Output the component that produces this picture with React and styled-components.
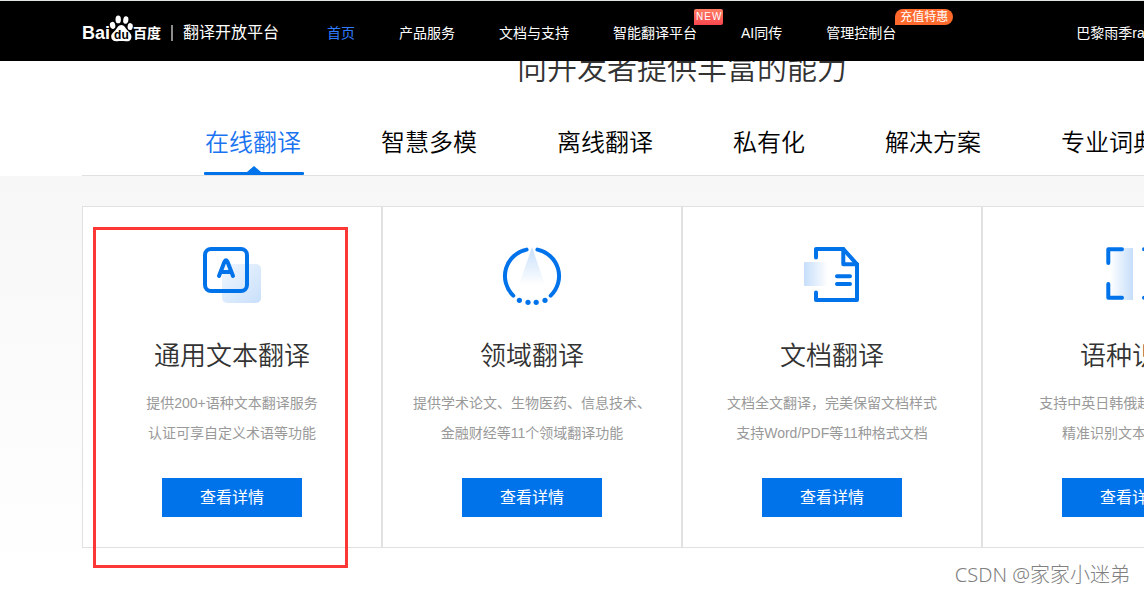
import React from 'react';
import styled, { createGlobalStyle } from 'styled-components';

const BLUE = '#0073eb';

const GlobalStyle = createGlobalStyle`
  *, *::before, *::after { box-sizing: border-box; }
  html, body { margin: 0; padding: 0; }
  body {
    background: #fff;
    color: #333;
    font-family: "Liberation Sans", "Noto Sans CJK SC", sans-serif;
    font-size: 14px;
  }
  h2, h3, p, ul { margin: 0; padding: 0; font-weight: 400; }
  ul { list-style: none; }
  a { color: inherit; text-decoration: none; }
  button { font-family: inherit; cursor: pointer; }
`;

const Page = styled.div`
  position: relative;
  min-height: 100vh;
  overflow: hidden;
`;

const Wide = styled.div`
  min-width: 1200px;
  margin-left: 82px;
`;

const Header = styled.header`
  position: fixed;
  top: 0;
  left: 0;
  right: 0;
  z-index: 10;
  overflow: hidden;
  background: #000;
  border-top: 1px solid #dfe4e1;
`;

const HeaderRow = styled(Wide)`
  display: flex;
  align-items: center;
  height: 60px;
  padding-top: 4px;
  color: #fff;
`;

const Logo = styled.a`
  display: flex;
  align-items: center;
  flex: none;
  width: 245px;
  line-height: 20px;
  white-space: nowrap;
`;

const LogoLatin = styled.span`
  font-size: 18px;
  font-weight: 700;
`;

const LogoCjk = styled.span`
  font-size: 14px;
  font-weight: 700;
`;

const Paw = styled.svg`
  flex: none;
  display: block;
  width: 24px;
  height: 28px;
  margin: 0 0 10px -1px;
`;

const LogoName = styled.span`
  margin-left: 10px;
  padding-left: 10px;
  font-size: 16px;
  line-height: 16px;
  border-left: 2px solid #8c8c8c;
`;

const NavList = styled.ul`
  display: flex;
  flex: none;
  gap: 44px;
`;

const NavItem = styled.li`
  position: relative;
  line-height: 20px;
  white-space: nowrap;
`;

const NavLink = styled.a`
  color: ${(p) => (p.$active ? '#2e7cff' : '#fff')};
`;

const Badge = styled.span`
  position: absolute;
  left: calc(100% - ${(p) => (p.$promo ? 1 : 3)}px);
  top: -14px;
  padding: ${(p) => (p.$promo ? '1px 5px 0' : '0 1px 0 2px')};
  font-size: ${(p) => (p.$promo ? 12 : 10)}px;
  line-height: ${(p) => (p.$promo ? 15 : 16)}px;
  letter-spacing: ${(p) => (p.$promo ? 0 : 1)}px;
  border-radius: ${(p) => (p.$promo ? '8px 8px 8px 0' : '2px 2px 2px 0')};
  background: ${(p) => (p.$promo ? '#ff6a2c' : 'linear-gradient(#ff7d62, #f8474f)')};
  color: #fff;
`;

const User = styled.a`
  margin-left: 180px;
  line-height: 20px;
  white-space: nowrap;
`;

const Main = styled.main`
  padding-top: 45px;
`;

const Heading = styled.h2`
  font-size: 30px;
  font-weight: 350;
  line-height: 48px;
  text-align: center;
`;

const Tabs = styled.div`
  display: flex;
  gap: 80px;
  margin-top: 32px;
  padding-left: 123px;
  border-bottom: 1px solid #e1e1e1;
`;

const Tab = styled.button`
  position: relative;
  flex: none;
  padding: 0 0 14px;
  border: 0;
  background: none;
  font-size: 24px;
  font-weight: 350;
  line-height: 36px;
  white-space: nowrap;
  color: ${(p) => (p.$active ? '#1a73f0' : '#000')};
`;

const TabMark = styled.svg`
  position: absolute;
  left: -1px;
  bottom: 0;
  width: 100px;
  height: 10px;
`;

const Band = styled.section`
  padding: 30px 0 45px;
  background: linear-gradient(#f7f7f7, #fff);
`;

const Cards = styled(Wide)`
  display: grid;
  grid-template-columns: repeat(4, 1fr);
`;

const Card = styled.article`
  position: relative;
  display: flex;
  flex-direction: column;
  align-items: center;
  padding: 40px 0 30px;
  background: #fff;
  border: 1px solid #e1e1e1;
  text-align: center;
`;

const CardIcon = styled.svg`
  display: block;
  width: 60px;
  height: 60px;
`;

const CardTitle = styled.h3`
  margin-top: 29px;
  font-size: 26px;
  font-weight: 350;
  line-height: 40px;
`;

const CardText = styled.p`
  margin-top: 12px;
  line-height: 30px;
  color: #999;
  white-space: pre-line;
`;

const DetailButton = styled.button`
  width: 140px;
  height: 39px;
  margin-top: 30px;
  padding: 0 0 3px;
  border: 0;
  background: ${BLUE};
  color: #fff;
  font-size: 16px;
`;

const Highlight = styled.div`
  position: absolute;
  top: 20px;
  bottom: -21px;
  left: 10px;
  right: 33px;
  border: 3px solid #fb3836;
  pointer-events: none;
`;

const Watermark = styled.div`
  position: absolute;
  right: 14px;
  bottom: 3px;
  font-family: "Noto Sans", "Noto Sans CJK SC", sans-serif;
  font-weight: 300;
  font-size: 20px;
  line-height: 30px;
  color: #808080;
`;

const Stroke = styled.g`
  fill: none;
  stroke: ${BLUE};
  stroke-width: 4;
  stroke-linecap: round;
  stroke-linejoin: round;
`;

function Gradient({ id, x1 = 0, y1 = 0, x2 = 0, y2 = 0 }) {
  return (
    <linearGradient id={id} x1={x1} y1={y1} x2={x2} y2={y2}>
      <stop offset="0" stopColor="#c6defa" />
      <stop offset="1" stopColor="#c6defa" stopOpacity="0" />
    </linearGradient>
  );
}

function TextIcon() {
  return (
    <CardIcon viewBox="0 0 60 60" aria-hidden="true">
      <defs>
        <linearGradient id="text-shade" x1="0" y1="0" x2="1" y2="1">
          <stop offset="0" stopColor="#f1f7fe" />
          <stop offset="1" stopColor="#c8dffa" />
        </linearGradient>
      </defs>
      <rect x="20" y="17" width="39" height="39" rx="5" fill="url(#text-shade)" />
      <Stroke>
        <rect x="3" y="2" width="42" height="42" rx="6" />
        <path d="M17 29 L22.6 14.5 Q24 12.2 25.4 14.5 L31 29 M20 25 H28" />
      </Stroke>
    </CardIcon>
  );
}

function DomainIcon() {
  return (
    <CardIcon viewBox="0 0 60 60" aria-hidden="true">
      <defs><Gradient id="domain-shade" y2={1} /></defs>
      <path d="M30 0 L43 38 H17 Z" fill="url(#domain-shade)" />
      <Stroke>
        <path d="M24.6 2.6 A27 27 0 0 0 11.3 48.6" />
        <path d="M35.4 2.6 A27 27 0 0 1 48.7 48.6" />
      </Stroke>
      <g fill={BLUE}>
        <circle cx="17.4" cy="53.3" r="2.6" />
        <circle cx="26" cy="55.3" r="2.6" />
        <circle cx="34.2" cy="55.3" r="2.6" />
        <circle cx="43" cy="53.3" r="2.6" />
      </g>
    </CardIcon>
  );
}

function DocumentIcon() {
  return (
    <CardIcon viewBox="0 0 60 60" aria-hidden="true">
      <defs><Gradient id="doc-shade" x2={1} /></defs>
      <rect x="2" y="15" width="24" height="24" rx="1" fill="url(#doc-shade)" />
      <Stroke>
        <path d="M14 10.5 V2 H41.3 L55 17.3 V53 H14 V45.5" />
        <path d="M41.3 2 V17.3 H55" />
        <path d="M35 29.3 H48 M35 37 H48" />
      </Stroke>
    </CardIcon>
  );
}

function LanguageIcon() {
  return (
    <CardIcon viewBox="0 0 60 60" aria-hidden="true">
      <defs><Gradient id="lang-shade" x1={1} /></defs>
      <rect x="8" y="1" width="23" height="52" fill="url(#lang-shade)" />
      <Stroke>
        <path d="M20 2.3 H6.3 V16" />
        <path d="M6.3 37 V50.7 H20" />
        <path d="M42 2.3 H54 V16" />
        <path d="M54 37 V50.7 H42" />
      </Stroke>
    </CardIcon>
  );
}

const navItems = [
  { label: '首页', active: true },
  { label: '产品服务' },
  { label: '文档与支持' },
  { label: '智能翻译平台', badge: 'NEW' },
  { label: 'AI同传' },
  { label: '管理控制台', badge: '充值特惠', promo: true },
];

const tabs = ['在线翻译', '智慧多模', '离线翻译', '私有化', '解决方案', '专业词典'];

const cards = [
  { title: '通用文本翻译', text: '提供200+语种文本翻译服务\n认证可享自定义术语等功能', Icon: TextIcon, marked: true },
  { title: '领域翻译', text: '提供学术论文、生物医药、信息技术、\n金融财经等11个领域翻译功能', Icon: DomainIcon },
  { title: '文档翻译', text: '文档全文翻译，完美保留文档样式\n支持Word/PDF等11种格式文档', Icon: DocumentIcon },
  { title: '语种识别', text: '支持中英日韩俄越等200+语种\n精准识别文本所属语种', Icon: LanguageIcon },
];

function BaiduPaw() {
  return (
    <Paw viewBox="0 0 24 28" aria-hidden="true">
      <g fill="#fff">
        <ellipse cx="9.2" cy="5.4" rx="2.7" ry="3.9" />
        <ellipse cx="16.8" cy="6" rx="2.6" ry="3.8" transform="rotate(8 16.8 6)" />
        <ellipse cx="3.6" cy="11.4" rx="2.7" ry="3.6" transform="rotate(-12 3.6 11.4)" />
        <ellipse cx="21.2" cy="12.6" rx="2.6" ry="3.5" transform="rotate(8 21.2 12.6)" />
        <path d="M12.4 11 C15.4 11 16.4 14.2 18.6 16.4 C20.8 18.6 22.8 20.2 22.4 23.4 C22 26.4 19.6 27.6 16.6 27.2 C13.8 26.8 11 26.8 8.2 27.2 C4.6 27.6 2.4 26 2.2 22.8 C2 19.6 4.4 18.4 6.4 16.2 C8.4 14 9.2 11 12.4 11 Z" />
      </g>
      <text x="12.4" y="25" textAnchor="middle" fontSize="12" fontWeight="700" fill="#000">du</text>
    </Paw>
  );
}

export default function App() {
  return (
    <Page>
      <GlobalStyle />
      <Header>
        <HeaderRow>
          <Logo href="#home">
            <LogoLatin>Bai</LogoLatin>
            <BaiduPaw />
            <LogoCjk>百度</LogoCjk>
            <LogoName>翻译开放平台</LogoName>
          </Logo>
          <nav>
            <NavList>
              {navItems.map((item) => (
                <NavItem key={item.label}>
                  <NavLink href="#nav" $active={item.active}>{item.label}</NavLink>
                  {item.badge && <Badge $promo={item.promo}>{item.badge}</Badge>}
                </NavItem>
              ))}
            </NavList>
          </nav>
          <User href="#account">巴黎雨季ra</User>
        </HeaderRow>
      </Header>
      <Main>
        <Wide>
          <Heading>向开发者提供丰富的能力</Heading>
          <Tabs role="tablist">
            {tabs.map((label, i) => (
              <Tab key={label} type="button" role="tab" aria-selected={i === 0} $active={i === 0}>
                {label}
                {i === 0 && (
                  <TabMark viewBox="0 0 100 10" aria-hidden="true">
                    <rect y="7" width="100" height="3" rx="1" fill={BLUE} />
                    <path d="M43 7 L50 1 L57 7 Z" fill={BLUE} />
                  </TabMark>
                )}
              </Tab>
            ))}
          </Tabs>
        </Wide>
        <Band>
          <Cards>
            {cards.map(({ title, text, Icon, marked }) => (
              <Card key={title}>
                <Icon />
                <CardTitle>{title}</CardTitle>
                <CardText>{text}</CardText>
                <DetailButton type="button">查看详情</DetailButton>
                {marked && <Highlight />}
              </Card>
            ))}
          </Cards>
        </Band>
      </Main>
      <Watermark>CSDN @家家小迷弟</Watermark>
    </Page>
  );
}
